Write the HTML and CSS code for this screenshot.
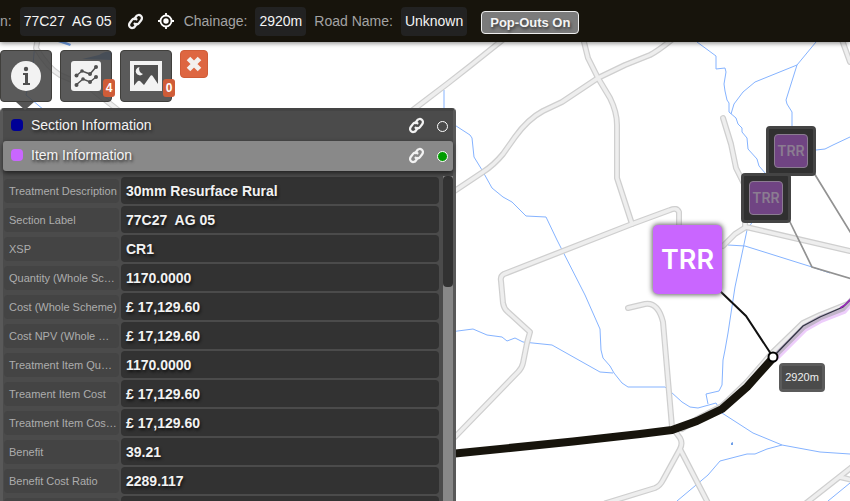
FILE: index.html
```html
<!DOCTYPE html>
<html lang="en">
<head>
<meta charset="utf-8">
<title>Scheme Map</title>
<link rel="stylesheet" href="styles.css">
</head>
<body>
<svg class="defs" aria-hidden="true">
  <symbol id="link" viewBox="0 0 18 18">
    <g fill="none" stroke="currentColor" stroke-width="2.400" stroke-linecap="round" transform="rotate(-8 9 9)">
      <path d="M8 6.300l2.600-2.700a3.300 3.300 0 0 1 4.700 4.700l-2.900 2.900a3.300 3.300 0 0 1-4.700 0"/>
      <path d="M10 11.700l-2.600 2.700a3.300 3.300 0 0 1-4.700-4.700l2.900-2.900a3.300 3.300 0 0 1 4.700 0"/>
    </g>
  </symbol>
</svg>
<header class="topbar">
  <span class="key key-first">n:</span>
  <span class="chip">77C27&nbsp; AG 05</span>
  <button class="icon-button" aria-label="Link"><svg class="link-icon"><use href="#link"/></svg></button>
  <button class="icon-button" aria-label="Locate"><svg class="locate-icon" viewBox="0 0 16 16"><circle cx="8" cy="8" r="5.500" fill="none" stroke="#fff" stroke-width="1.800"/><circle cx="8" cy="8" r="2.700" fill="#fff"/><path d="M8 0v3M8 13v3M0 8h3M13 8h3" stroke="#fff" stroke-width="1.800"/></svg></button>
  <span class="key">Chainage:</span>
  <span class="chip">2920m</span>
  <span class="key">Road Name:</span>
  <span class="chip">Unknown</span>
  <button class="popouts">Pop-Outs On</button>
</header>
<main class="stage">
  <svg class="map" viewBox="0 42 850 459" width="850" height="459" aria-hidden="true">
    <defs>
      <g id="roads" fill="none" stroke-linejoin="round" stroke-linecap="round">
        <path d="M38 38L36 48Q48 68 60 75L90 88L118 110L150 140"/>
        <path d="M505 38L470 66L447 84L405 116"/>
        <path d="M583 38L588 58L598 78L610 98Q617 112 617 125L617 178L632 224"/>
        <path d="M450 194L483 172Q494 165 503 154L515 137Q528 119 543 111L562 102L598 78L625 65L650 55Q658 51 674 38"/>
        <path d="M679 230L679 212Q677 207 670 210L632 224L504 274Q500 276 501 281L503 303Q504 309 508 312L530 332L527 343L523 363Q522 368 518 372L452 440"/>
        <path d="M628 308L645 304Q658 302 663 322L672 427L680 438Q683 443 680 449L663 480Q660 486 655 488L606 503M680 449L708 503"/>
        <path d="M723 118L731 144L736 168L748 192M723 246L735 234L746 227L850 251M745 220V227M842 40L850 62M805 504L852 467M840 477L852 480"/>
        <path d="M682 429L697 419L722 406L747 382L772 353L803 323L820 315L850 303"/>
      </g>
    </defs>
    <g fill="none" stroke="#85b3ff">
      <path d="M35 42L33 65L26 95L44 110M444 90V112"/>
      <path d="M450 122L470 135L472 138L474 157L482 170L492 188L503 197L512 202L526 216L546 217L557 240L585 295L600 329L601 350L603 358L610 366L614 373L622 383L628 387H665L671 392L682 402L690 407L698 408L716 403L722 413L753 433L782 445L820 452L850 454"/>
      <path d="M450 332L473 329L487 335L502 337L507 341L515 338L523 342L552 345L600 372L613 373"/>
      <path d="M697 42L716 56V69L725 68L726 72L724 84L725 91L727 100L729 103V112L736 118L738 124L742 128V132L747 138L748 149L757 159L759 166L766 174"/>
      <path d="M816 42L797 65L755 82L743 92L734 104L731 114M797 65L786 100L787 104L792 112V127M816 150L825 149L833 145L850 137"/>
      <path d="M753 221L747 230L735 287L733 300L728 333L725 350L723 360L722 385L719 391L706 394L708 404M728 245L745 246L812 267L830 273"/>
      <path d="M782 445L767 449L755 454L747 454L720 461L708 475L677 501M850 483L828 501"/>
    </g>
    <path d="M731 443l2-1v3h-2z M58 42h8l5 2-1 2z M82 59L99 55Q108 49 112 53V60Z" fill="#6f9fe8"/>
    <use href="#roads" stroke="#cfcfcf" stroke-width="6"/>
    <use href="#roads" stroke="#eee" stroke-width="3.500"/>
    <path d="M775 359L805 329L821 320L844 311L852 302" fill="none" stroke="#edcdfb" stroke-width="6"/>
    <path d="M774 357L804 327L820 318L843 309L852 299" fill="none" stroke="#c2b5ca" stroke-width="5"/>
    <path d="M773 357L803 326L820 317L843 307L850 300" fill="none" stroke="#303442" stroke-width="1.300"/>
    <path d="M840 308L845 305L851 299" fill="none" stroke="#9a22be" stroke-width="1.500"/>
    <path d="M450 454L573 441.500L640 434L672 430L697 421L722 409L747 387L773 358" fill="none" stroke="#17140c" stroke-width="8" stroke-linejoin="round"/>
    <path d="M814 173L852 235M789 220L812 267L852 279" fill="none" stroke="#929292" stroke-width="1.700"/>
    <path d="M720 291L746 316L773 357" fill="none" stroke="#111" stroke-width="2"/>
    <circle cx="773" cy="357" r="4.500" fill="#fff" stroke="#000" stroke-width="2"/>
  </svg>

  <div class="marker marker-small marker-a"><span>TRR</span></div>
  <div class="marker marker-small marker-b"><span>TRR</span></div>
  <div class="marker marker-large">TRR</div>
  <div class="tooltip">2920m</div>

  <div class="overlay">
    <nav class="tools">
      <button class="tool tool-active" aria-label="Information"><svg class="info-icon" viewBox="0 0 30 30"><circle cx="15" cy="15" r="15" fill="#f2f2f2"/><circle cx="15" cy="8" r="2.200" fill="#505050"/><path d="M12 12h5v10h2v2h-7v-2h2v-8h-2z" fill="#505050"/></svg></button>
      <button class="tool" aria-label="Charts"><svg class="chart-icon" viewBox="0 0 30 30"><rect width="30" height="30" rx="3" fill="#f2f2f2"/><g fill="none" stroke="#505050" stroke-width="1.500"><path d="M5 15L11 10L19 13L25 6M5 24L12 18L19 21L25 16"/></g><g fill="#505050"><circle cx="5.500" cy="14.500" r="2"/><circle cx="11" cy="10" r="1.800"/><circle cx="19" cy="13" r="2"/><circle cx="25" cy="6" r="2"/><circle cx="5.500" cy="24" r="2"/><circle cx="12" cy="18" r="1.800"/><circle cx="19" cy="21" r="2"/><circle cx="25" cy="16" r="2"/></g></svg><span class="badge">4</span></button>
      <button class="tool" aria-label="Pictures"><svg class="picture-icon" viewBox="0 0 32 30"><rect width="32" height="30" fill="#f2f2f2"/><path d="M4 4h24v19L23 15.500Q21.500 13 20 15.500L14 24L11 21Q9 18.500 7 21L4 24.500z" fill="#505050"/><path d="M9.500 6A4.200 4.200 0 1 0 13 13A5 5 0 0 1 9.500 6z" fill="#f2f2f2"/></svg><span class="badge">0</span></button>
      <button class="close" aria-label="Close"><svg class="close-icon" viewBox="0 0 16 16"><path d="M2.500 2.500L13.500 13.500M13.500 2.500L2.500 13.500" stroke="#f3f0ee" stroke-width="5"/></svg></button>
    </nav>
    <section class="panel">
      <div class="tab"><i class="swatch swatch-blue"></i><span class="tab-title">Section Information</span><svg class="link-icon"><use href="#link"/></svg><i class="dot"></i></div>
      <div class="tab tab-selected"><i class="swatch swatch-violet"></i><span class="tab-title">Item Information</span><svg class="link-icon"><use href="#link"/></svg><i class="dot dot-on"></i></div>
      <div class="details">
        <table>
          <tr><th scope="row"><div>Treatment Description</div></th><td>30mm Resurface Rural</td></tr>
          <tr><th scope="row"><div>Section Label</div></th><td>77C27&nbsp; AG 05</td></tr>
          <tr><th scope="row"><div>XSP</div></th><td>CR1</td></tr>
          <tr><th scope="row"><div>Quantity (Whole Sc…</div></th><td>1170.0000</td></tr>
          <tr><th scope="row"><div>Cost (Whole Scheme)</div></th><td>£ 17,129.60</td></tr>
          <tr><th scope="row"><div>Cost NPV (Whole …</div></th><td>£ 17,129.60</td></tr>
          <tr><th scope="row"><div>Treatment Item Qu…</div></th><td>1170.0000</td></tr>
          <tr><th scope="row"><div>Treament Item Cost</div></th><td>£ 17,129.60</td></tr>
          <tr><th scope="row"><div>Treatment Item Cos…</div></th><td>£ 17,129.60</td></tr>
          <tr><th scope="row"><div>Benefit</div></th><td>39.21</td></tr>
          <tr><th scope="row"><div>Benefit Cost Ratio</div></th><td>2289.117</td></tr>
          <tr><th scope="row"><div></div></th><td></td></tr>
        </table>
        <div class="scrollbar"><div class="thumb"></div></div>
      </div>
    </section>
  </div>
</main>
</body>
</html>
```
FILE: styles.css
```css
* { box-sizing: border-box; }

body {
  margin: 0;
  height: 100vh;
  display: flex;
  flex-direction: column;
  overflow: hidden;
  background: #fff;
  font: 14px/20px "Liberation Sans", Arial, sans-serif;
}

button {
  padding: 0;
  border: 0;
  background: none;
  font: inherit;
  color: inherit;
}

svg { display: block; }

.defs {
  position: absolute;
  width: 0;
  height: 0;
}

.topbar {
  position: relative;
  z-index: 2;
  display: flex;
  align-items: center;
  flex: none;
  height: 42px;
  background: #17140c;
  box-shadow: 0 1px 5px rgba(0, 0, 0, 0.5);
  color: #f4f4f4;
  white-space: nowrap;
}

.key {
  margin: 0 8px;
  color: #a3a3a3;
}

.key-first { margin-left: 0; }

.chip {
  height: 29px;
  padding: 0 4px;
  border-radius: 4px;
  background: #222;
  line-height: 29px;
}

.icon-button {
  width: 20px;
  margin-left: 10px;
  display: flex;
  justify-content: center;
}

.link-icon {
  width: 17px;
  height: 17px;
  color: #f2f2f2;
}

.locate-icon {
  width: 16px;
  height: 16px;
}

.popouts {
  height: 23px;
  margin: 3px 0 0 14px;
  padding: 0 8px;
  border: 1px solid #eee;
  border-radius: 4px;
  background: #7b7b7b;
  font-size: 13px;
  font-weight: bold;
  text-shadow: 1px 2px 3px #333;
}

.stage {
  position: relative;
  flex: 1;
  min-height: 0;
}

.map {
  position: absolute;
  top: 0;
  left: 0;
}

.marker {
  position: absolute;
  display: flex;
  align-items: center;
  justify-content: center;
  font-family: Inter, sans-serif;
  font-weight: 600;
}

.marker-small {
  width: 50px;
  height: 50px;
  border: 3px solid #444;
  border-radius: 4px;
  background: #303030;
  color: #8b7c91;
  font-size: 14px;
}

.marker-small span {
  width: 34px;
  height: 34px;
  border: 1px solid #8b7c91;
  border-radius: 4px;
  background: #704483;
  line-height: 32px;
  text-align: center;
}

.marker-a {
  left: 766px;
  top: 84px;
}

.marker-b {
  left: 741px;
  top: 131px;
}

.marker-large {
  left: 653px;
  top: 183px;
  width: 69px;
  height: 69px;
  border-radius: 5px;
  background: #c966ff;
  box-shadow: 0 0 5px 1px #666;
  color: #fff;
  font-size: 27px;
}

.tooltip {
  position: absolute;
  left: 779px;
  top: 321px;
  width: 46px;
  height: 29px;
  border: 3px solid #5b5b5b;
  border-radius: 4px;
  background: #4b4b4b;
  color: #eee;
  font-size: 11px;
  line-height: 23px;
  text-align: center;
}

.overlay {
  position: relative;
  display: flex;
  flex-direction: column;
  width: 456px;
  max-width: 100%;
  height: 100%;
  padding-top: 8px;
}

.tools {
  display: flex;
  flex: none;
  gap: 8px;
  height: 58px;
}

.tool {
  position: relative;
  display: flex;
  align-items: center;
  justify-content: center;
  width: 52px;
  height: 52px;
  border: 1px solid #403f3c;
  border-radius: 4px;
  background: rgba(65, 65, 65, 0.87);
}

.tool-active::after {
  content: "";
  position: absolute;
  top: 51px;
  left: 15px;
  border: 9px solid transparent;
  border-top: 8px solid #555;
  border-bottom: 0;
}

.info-icon, .chart-icon {
  width: 30px;
  height: 30px;
}

.picture-icon {
  width: 32px;
  height: 30px;
}

.badge {
  position: absolute;
  right: -4px;
  bottom: 4px;
  width: 12px;
  height: 18px;
  border-radius: 3px;
  background: #cf5c38;
  color: #fff;
  font-size: 12px;
  font-weight: bold;
  line-height: 18px;
  text-align: center;
}

.close {
  display: flex;
  align-items: center;
  justify-content: center;
  width: 28px;
  height: 28px;
  border: 1px solid #cf5c38;
  border-radius: 4px;
  background: #de6641;
}

.close-icon {
  width: 16px;
  height: 16px;
}

.panel {
  display: flex;
  flex-direction: column;
  flex: 1;
  min-height: 0;
  border: 3px solid #595959;
  border-top-color: #444;
  border-bottom: 0;
  border-radius: 4px 4px 0 0;
  background: #4b4b4b;
}

.tab {
  display: flex;
  align-items: center;
  flex: none;
  height: 30px;
  padding: 0 5px 2px 8px;
  color: #f4f4f4;
  text-shadow: 1px 2px 3px #222;
}

.tab-selected {
  position: relative;
  border-radius: 3px;
  background: #898989;
  box-shadow: 0 2px 5px rgba(0, 0, 0, 0.6);
}

.swatch {
  width: 12px;
  height: 12px;
  margin-right: 8px;
  border-radius: 4px;
}

.swatch-blue { background: #000096; }
.swatch-violet { background: #c966ff; }

.tab-title { flex: 1; }

.dot {
  width: 11px;
  height: 11px;
  margin: 2px 0 0 12px;
  border: 1px solid #fff;
  border-radius: 50%;
}

.dot-on { background: #009c00; }

.details {
  display: flex;
  flex: 1;
  min-height: 0;
  padding-top: 4px;
  overflow: hidden;
}

table {
  flex: 1;
  align-self: flex-start;
  table-layout: fixed;
  border-spacing: 2px;
  margin-left: -1px;
  text-align: left;
}

th, td {
  height: 27px;
  padding: 0;
}

th {
  width: 115px;
  font-weight: normal;
}

th div {
  height: 24px;
  padding-left: 5px;
  border-radius: 4px;
  background: #444;
  color: #adadad;
  font-size: 11px;
  line-height: 24px;
  white-space: nowrap;
}

td {
  padding-left: 5px;
  border-radius: 4px;
  background: #323232;
  color: #f2f2f2;
  font-weight: bold;
  line-height: 26px;
  text-shadow: 1px 2px 3px #111;
}

.scrollbar {
  width: 10px;
  margin: 1px 0 0 2px;
  background: #888;
}

.thumb {
  height: 111px;
  border-radius: 4px;
  background: #323232;
}
```
